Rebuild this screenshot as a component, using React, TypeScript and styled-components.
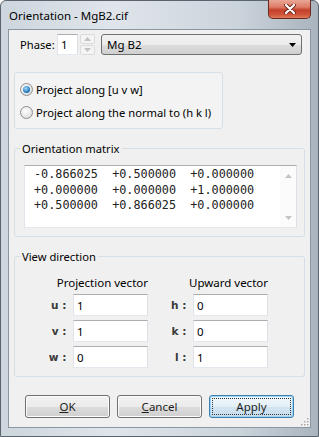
import * as React from "react";
import styled, { createGlobalStyle } from "styled-components";

const GlobalStyle = createGlobalStyle`
  html, body {
    margin: 0;
    padding: 0;
    background: #ffffff;
  }
  body {
    font-family: "Noto Sans", "Open Sans", sans-serif;
    font-size: 11px;
    color: #000;
  }
`;

const Window = styled.div`
  width: 319px;
  height: 437px;
  box-sizing: border-box;
  display: flex;
  flex-direction: column;
  padding: 0 7px 8px 7px;
  border: 1px solid #5a646f;
  border-radius: 6px 6px 0 0;
  background: linear-gradient(90deg, #cdd5dd 0%, #dfe5ea 35%, #cbd3db 75%, #aab4be 100%);
`;

const TitleBar = styled.div`
  height: 28px;
  display: flex;
  justify-content: space-between;
  align-items: flex-start;
`;

const Title = styled.div`
  padding: 7px 0 0 1px;
  font-size: 11.5px;
  color: #000;
  line-height: 15px;
`;

const CloseButton = styled.div`
  width: 43px;
  height: 19px;
  margin-top: -1px;
  box-sizing: border-box;
  border: 1px solid #6b2a20;
  border-top: none;
  border-radius: 0 0 5px 5px;
  background: linear-gradient(180deg, #eaa797 0%, #dc7a66 40%, #c4402b 55%, #cf5338 80%, #e07c5c 100%);
  display: flex;
  align-items: center;
  justify-content: center;
`;

const Client = styled.div`
  flex: 1;
  position: relative;
  display: flex;
  flex-direction: column;
  padding: 4px 5px 0 5px;
  background: #f0f0f0;
  border: 1px solid #8a96a2;
`;

const PhaseRow = styled.div`
  height: 21px;
  display: flex;
  align-items: center;
  padding: 0 3px 0 6px;
`;

const PhaseLabel = styled.span`
  width: 37px;
  line-height: 15px;
  font-size: 11.2px;
`;

const TextBox = styled.div<{ $w?: number }>`
  ${(p) => (p.$w ? `width: ${p.$w}px;` : "")}
  height: 100%;
  box-sizing: border-box;
  background: #fff;
  border: 1px solid;
  border-color: #abadb3 #dbdfe6 #e3e9ef #e2e3ea;
  padding-left: 3px;
  display: flex;
  align-items: center;
  font-size: 11.5px;
`;

const Spinner = styled.div`
  width: 15px;
  height: 21px;
  margin: 0 6px 0 2px;
  display: flex;
  flex-direction: column;
  gap: 1px;
`;

const SpinHalf = styled.div`
  flex: 1;
  box-sizing: border-box;
  border: 1px solid #dcdcdc;
  border-radius: 2px;
  background: #f4f4f4;
  display: flex;
  align-items: center;
  justify-content: center;
`;

const Combo = styled.div`
  flex: 1;
  height: 21px;
  box-sizing: border-box;
  border: 1px solid #707070;
  border-radius: 3px;
  background: linear-gradient(180deg, #f2f2f2 0%, #ebebeb 50%, #dddddd 51%, #cfcfcf 100%);
  display: flex;
  align-items: center;
  justify-content: space-between;
  padding: 0 5px 0 5px;
  font-size: 11.5px;
`;

const RadioBox = styled.div`
  width: 209px;
  margin-top: 17px;
  box-sizing: border-box;
  border: 1px solid #d5dfe5;
  border-radius: 3px;
  background: #f3f3f3;
  padding: 8px 5px 7px 5px;
  display: flex;
  flex-direction: column;
  gap: 6px;
`;

const RadioRow = styled.label`
  height: 17px;
  display: flex;
  align-items: center;
  gap: 3px;
  font-size: 11.2px;
`;

const RadioCircle = styled.span<{ $checked?: boolean }>`
  width: 13px;
  height: 13px;
  box-sizing: border-box;
  border-radius: 50%;
  border: 1px solid #8e8f8f;
  background: radial-gradient(circle at 40% 35%, #ffffff 0%, #e6e6e6 60%, #cfcfcf 100%);
  display: flex;
  align-items: center;
  justify-content: center;

  &::after {
    content: "";
    display: ${(p) => (p.$checked ? "block" : "none")};
    width: 7px;
    height: 7px;
    border-radius: 50%;
    background: radial-gradient(circle at 40% 35%, #a9defa 0%, #2f86c4 55%, #1b4f7c 100%);
  }
`;

const Group = styled.fieldset<{ $pad?: string }>`
  margin: 12px 0 0 0;
  min-width: 0;
  border: 1px solid #d5dfe5;
  border-radius: 3px;
  padding: ${(p) => p.$pad || "9px 7px 8px 9px"};
`;

const Legend = styled.legend`
  padding: 0 2px;
  margin-left: -4px;
  line-height: 15px;
  font-size: 11.2px;
`;

const MatrixBox = styled.div`
  height: 63px;
  box-sizing: border-box;
  background: #fff;
  border: 1px solid;
  border-color: #abadb3 #dbdfe6 #e3e9ef #e2e3ea;
  display: flex;
`;

const MatrixText = styled.pre`
  flex: 1;
  margin: 0;
  padding: 1px 0 0 9px;
  font-family: "DejaVu Sans Mono", "Liberation Mono", monospace;
  font-size: 11.8px;
  line-height: 15.5px;
  color: #222;
`;

const ScrollTrack = styled.div`
  width: 16px;
  display: flex;
  flex-direction: column;
  justify-content: space-between;
  align-items: center;
  padding: 8px 0 7px 0;
  background: #fbfbfb;
`;

const VectorGrid = styled.div`
  display: grid;
  grid-template-columns: 40px 75px 39px 75px;
  grid-template-rows: 15px 22px 22px 22px;
  column-gap: 3px;
  row-gap: 4px;
  margin-left: 6px;
`;

const ColHead = styled.div`
  justify-self: end;
  white-space: nowrap;
  line-height: 15px;
  font-size: 11.5px;
`;

const AxisLabel = styled.div`
  justify-self: end;
  align-self: center;
  font-family: "DejaVu Sans", sans-serif;
  font-weight: bold;
  font-size: 10.5px;
  color: #3a3a3a;
  white-space: pre;
`;

const ButtonRow = styled.div`
  margin-top: 18px;
  padding-left: 11px;
  display: flex;
  gap: 7px;
`;

const Button = styled.div<{ $default?: boolean }>`
  width: 85px;
  height: 23px;
  box-sizing: border-box;
  border: 1px solid ${(p) => (p.$default ? "#3c7fb1" : "#707070")};
  border-radius: 3px;
  background: ${(p) =>
    p.$default
      ? "linear-gradient(180deg, #f1f8fc 0%, #e3eff7 50%, #d3e5f1 51%, #c6dcec 100%)"
      : "linear-gradient(180deg, #f2f2f2 0%, #ebebeb 50%, #dddddd 51%, #cfcfcf 100%)"};
  box-shadow: ${(p) => (p.$default ? "inset 0 0 0 1px #9fd4f3" : "inset 0 0 0 1px #fcfcfc")};
  display: flex;
  align-items: center;
  justify-content: center;
  font-size: 11.5px;
  color: #1e1e1e;
  position: relative;

  ${(p) =>
    p.$default
      ? `&::after {
    content: "";
    position: absolute;
    inset: 2px;
    border: 1px dotted #333;
  }`
      : ""}
`;

const Mnemonic = styled.span`
  text-decoration: underline;
`;

const Grip = styled.svg`
  position: absolute;
  right: 1px;
  bottom: 1px;
`;

const Arrow = ({ dir, color }: { dir: "up" | "down"; color: string }) => (
  <svg width="7" height="4" viewBox="0 0 7 4">
    <path d={dir === "up" ? "M0 4 L3.5 0 L7 4 Z" : "M0 0 L3.5 4 L7 0 Z"} fill={color} />
  </svg>
);

const rows: [string, string, string, string][] = [
  ["u : ", "1", "h : ", "0"],
  ["v : ", "1", "k : ", "0"],
  ["w : ", "0", "l : ", "1"],
];

export default function App() {
  return (
    <>
      <GlobalStyle />
      <Window>
        <TitleBar>
          <Title>Orientation - MgB2.cif</Title>
          <CloseButton>
            <svg width="12" height="10" viewBox="0 0 12 10">
              <path d="M2 1 L10 9 M10 1 L2 9" stroke="#6e2419" strokeWidth="4" strokeLinecap="round" />
              <path d="M2 1 L10 9 M10 1 L2 9" stroke="#ffffff" strokeWidth="2.2" strokeLinecap="round" />
            </svg>
          </CloseButton>
        </TitleBar>
        <Client>
          <PhaseRow>
            <PhaseLabel>Phase:</PhaseLabel>
            <TextBox $w={21}>1</TextBox>
            <Spinner>
              <SpinHalf>
                <Arrow dir="up" color="#c2c2c2" />
              </SpinHalf>
              <SpinHalf>
                <Arrow dir="down" color="#c2c2c2" />
              </SpinHalf>
            </Spinner>
            <Combo>
              <span>Mg B2</span>
              <Arrow dir="down" color="#000" />
            </Combo>
          </PhaseRow>

          <RadioBox>
            <RadioRow>
              <RadioCircle $checked />
              Project along [u v w]
            </RadioRow>
            <RadioRow>
              <RadioCircle />
              Project along the normal to (h k l)
            </RadioRow>
          </RadioBox>

          <Group>
            <Legend>Orientation matrix</Legend>
            <MatrixBox>
              <MatrixText>
                {"-0.866025  +0.500000  +0.000000\n+0.000000  +0.000000  +1.000000\n+0.500000  +0.866025  +0.000000"}
              </MatrixText>
              <ScrollTrack>
                <Arrow dir="up" color="#c4c4c4" />
                <Arrow dir="down" color="#c4c4c4" />
              </ScrollTrack>
            </MatrixBox>
          </Group>

          <Group $pad="11px 7px 8px 9px">
            <Legend>View direction</Legend>
            <VectorGrid>
              <span />
              <ColHead>Projection vector</ColHead>
              <span />
              <ColHead>Upward vector</ColHead>
              {rows.map((r) => (
                <React.Fragment key={r[0]}>
                  <AxisLabel>{r[0]}</AxisLabel>
                  <TextBox>{r[1]}</TextBox>
                  <AxisLabel>{r[2]}</AxisLabel>
                  <TextBox>{r[3]}</TextBox>
                </React.Fragment>
              ))}
            </VectorGrid>
          </Group>

          <ButtonRow>
            <Button>
              <span>
                <Mnemonic>O</Mnemonic>K
              </span>
            </Button>
            <Button>
              <span>
                <Mnemonic>C</Mnemonic>ancel
              </span>
            </Button>
            <Button $default>Apply</Button>
          </ButtonRow>

          <Grip width="8" height="8" viewBox="0 0 8 8">
            {[
              [6, 0],
              [6, 3],
              [3, 3],
              [6, 6],
              [3, 6],
              [0, 6],
            ].map(([x, y]) => (
              <React.Fragment key={`${x}-${y}`}>
                <rect x={x + 1} y={y + 1} width="1.5" height="1.5" fill="#ffffff" />
                <rect x={x} y={y} width="1.5" height="1.5" fill="#a8a8a8" />
              </React.Fragment>
            ))}
          </Grip>
        </Client>
      </Window>
    </>
  );
}
